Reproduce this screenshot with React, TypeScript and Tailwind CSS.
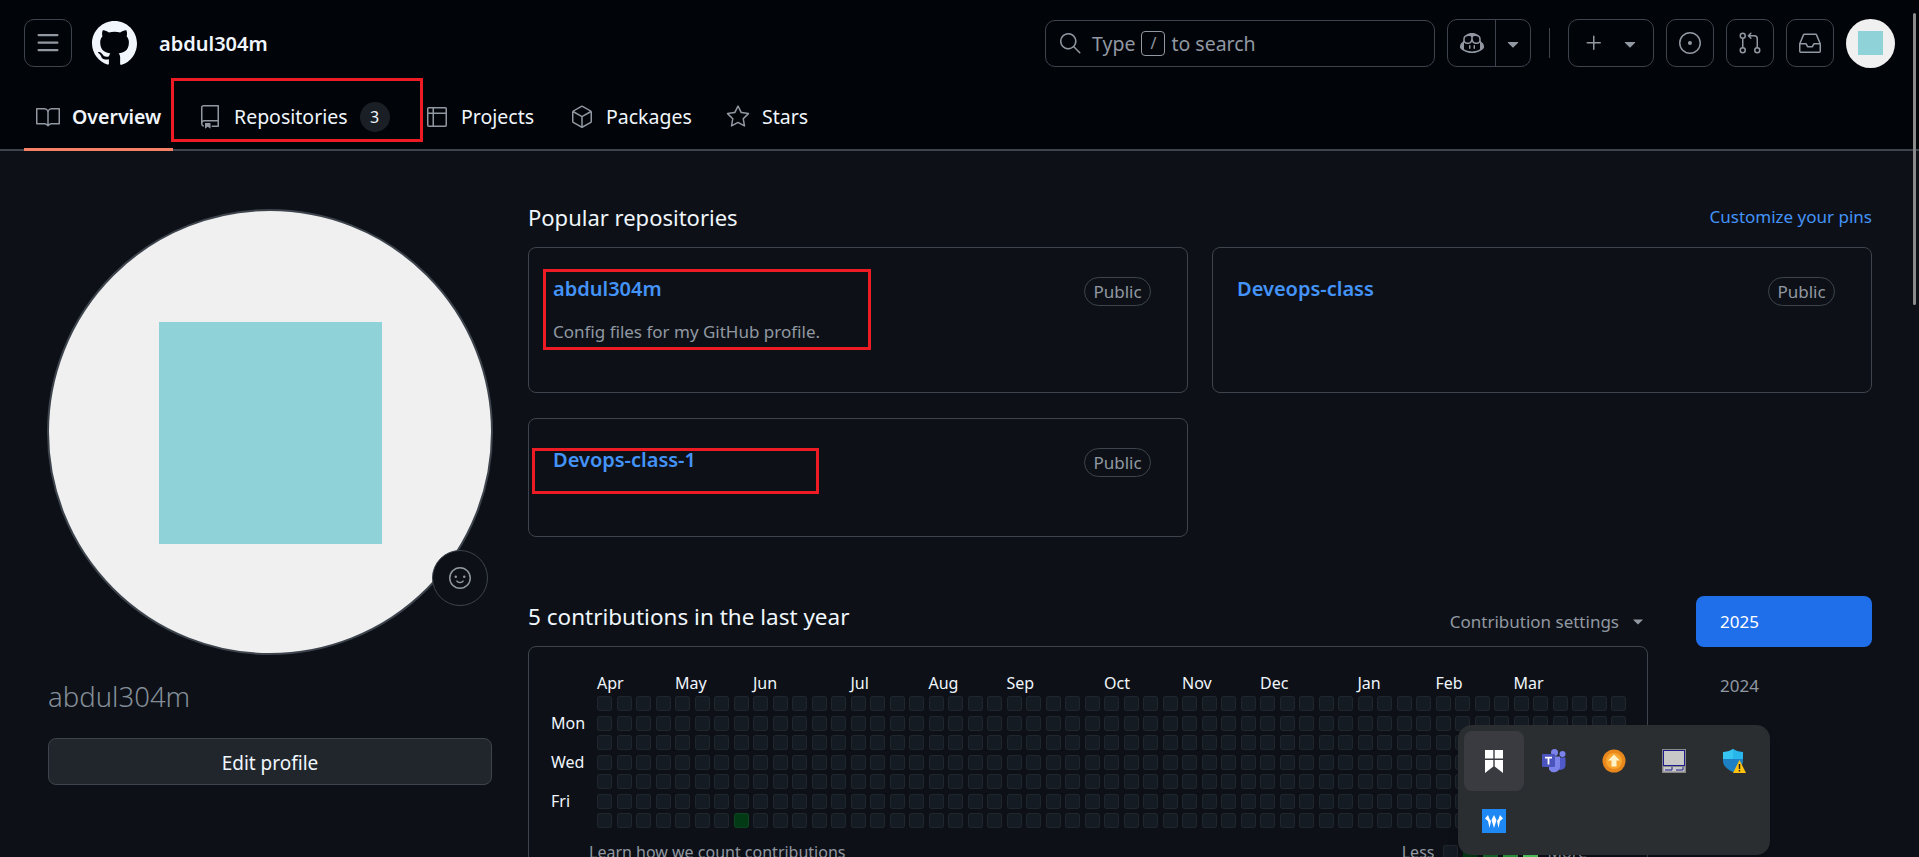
import React from 'react';
import {
  GoBook,
  GoRepo,
  GoTable,
  GoPackage,
  GoStar,
  GoSearch,
  GoPlus,
  GoIssueOpened,
  GoGitPullRequest,
  GoInbox,
  GoSmiley,
  GoCopilot,
  GoTriangleDown,
} from 'react-icons/go';

const font = { fontFamily: '"Noto Sans", "Open Sans", sans-serif' };

const tabs = [
  { label: 'Overview', icon: GoBook, active: true },
  { label: 'Repositories', icon: GoRepo, count: 3 },
  { label: 'Projects', icon: GoTable },
  { label: 'Packages', icon: GoPackage },
  { label: 'Stars', icon: GoStar },
];

const months = [
  { name: 'Apr', span: 4 },
  { name: 'May', span: 4 },
  { name: 'Jun', span: 5 },
  { name: 'Jul', span: 4 },
  { name: 'Aug', span: 4 },
  { name: 'Sep', span: 5 },
  { name: 'Oct', span: 4 },
  { name: 'Nov', span: 4 },
  { name: 'Dec', span: 5 },
  { name: 'Jan', span: 4 },
  { name: 'Feb', span: 4 },
  { name: 'Mar', span: 6 },
];

const days = ['', 'Mon', '', 'Wed', '', 'Fri', ''];

const GithubMark = () => (
  <svg width="45" height="45" viewBox="0 0 16 16" fill="currentColor" className="ml-[20px] text-[#f0f6fc] shrink-0">
    <path d="M8 0c4.42 0 8 3.58 8 8a8.013 8.013 0 0 1-5.45 7.59c-.4.08-.55-.17-.55-.38 0-.27.01-1.13.01-2.2 0-.75-.25-1.23-.54-1.48 1.78-.2 3.65-.88 3.65-3.95 0-.88-.31-1.59-.82-2.15.08-.2.36-1.02-.08-2.12 0 0-.67-.22-2.2.82-.64-.18-1.32-.27-2-.27-.68 0-1.36.09-2 .27-1.53-1.03-2.2-.82-2.2-.82-.44 1.1-.16 1.92-.08 2.12-.51.56-.82 1.28-.82 2.15 0 3.06 1.86 3.75 3.64 3.95-.23.2-.44.55-.51.98-.46.21-1.61.55-2.33-.66-.15-.24-.6-.83-1.23-.82-.67.01-.27.38.01.53.34.19.73.9.82 1.13.16.45.68 1.31 2.69.94 0 .67.01 1.3.01 1.49 0 .21-.15.45-.55.38A7.995 7.995 0 0 1 0 8c0-4.42 3.58-8 8-8Z" />
  </svg>
);

const ThreeBars = () => (
  <svg width="24" height="24" viewBox="0 0 16 16" fill="currentColor">
    <path d="M1 2.75A.75.75 0 0 1 1.75 2h12.5a.75.75 0 0 1 0 1.5H1.75A.75.75 0 0 1 1 2.75Zm0 5A.75.75 0 0 1 1.75 7h12.5a.75.75 0 0 1 0 1.5H1.75A.75.75 0 0 1 1 7.75ZM1.75 12h12.5a.75.75 0 0 1 0 1.5H1.75a.75.75 0 0 1 0-1.5Z" />
  </svg>
);

const IconButton = ({ children }: { children: React.ReactNode }) => (
  <button className="w-[48px] h-[48px] flex items-center justify-center rounded-[10px] border border-[#3d444d] text-[#9198a1]">
    {children}
  </button>
);

const PublicBadge = () => (
  <span className="h-[29px] w-[67px] mt-[1px] flex items-center justify-center rounded-full border border-[#3d444d] text-[#9198a1] text-[17px]">
    Public
  </span>
);

const RedBox = ({ className }: { className: string }) => (
  <div className={`absolute border-[3px] border-[#ed1c24] pointer-events-none ${className}`} />
);

const TrayIcons = () => (
  <div className="absolute left-[1458px] top-[725px] w-[312px] h-[130px] rounded-[14px] bg-[#2b2e31] p-[6px] shadow-lg grid grid-cols-[60px_60px_60px_60px_60px] auto-rows-[60px] gap-x-0">
    <div className="w-[60px] h-[60px] rounded-[8px] bg-[#393b40] flex items-center justify-center">
      <svg width="18" height="23" viewBox="0 0 18 23">
        <path d="M0 0h8.3v8.6H0zM9.7 0H18v8.6H9.7zM0 10h8.3v6.4L0 23zM9.7 10H18v13l-8.3-6.6z" fill="#fff" />
      </svg>
    </div>
    <div className="flex items-center justify-center">
      <svg width="24" height="24" viewBox="0 0 24 24">
        <circle cx="20.5" cy="5" r="3" fill="#7b83eb" />
        <path d="M15 8.5h8.5v7.5a5 5 0 0 1-8.5 3.5z" fill="#5059c9" />
        <circle cx="12.5" cy="3.5" r="3.5" fill="#7b83eb" />
        <path d="M7 7.5h11v10a6 6 0 0 1-11 3z" fill="#7b83eb" />
        <rect x="0" y="5" width="13" height="13" rx="1" fill="#4b53bc" />
        <path d="M3 7.8h7v1.6H7.4v6H5.6v-6H3z" fill="#fff" />
      </svg>
    </div>
    <div className="flex items-center justify-center">
      <svg width="24" height="24" viewBox="0 0 24 24">
        <circle cx="12" cy="12" r="11.5" fill="#e8871c" />
        <circle cx="12" cy="12" r="8" fill="#f8a630" />
        <path d="M12 5.5l6 6h-3.5v6h-5v-6H6z" fill="#fff2c8" />
      </svg>
    </div>
    <div className="flex items-center justify-center">
      <svg width="24" height="24" viewBox="0 0 24 24">
        <rect width="24" height="24" fill="#8a8a8a" />
        <rect x="1.5" y="1.5" width="21" height="15" fill="#c8c8c8" stroke="#1c1c8c" strokeWidth="1" />
        <rect x="1.5" y="18" width="21" height="4.5" fill="#c8c8c8" />
        <path d="M3 21h7v-3M14 21h7v-3" fill="none" stroke="#1c1c8c" strokeWidth="1" />
      </svg>
    </div>
    <div className="flex items-center justify-center">
      <svg width="24" height="24" viewBox="0 0 24 24">
        <path d="M11 0c3 2 6 3 10 3v9c0 5-4 8-10 11C5 20 1 17 1 12V3c4 0 7-1 10-3z" fill="#1d7fc4" />
        <path d="M11 0c3 2 6 3 10 3v7H11z" fill="#29b6ea" />
        <path d="M1 3c4 0 7-1 10-3v10H1z" fill="#35c5f0" />
        <path d="M17.5 11L24 24H11z" fill="#ffc20e" />
        <path d="M16.8 15h1.4v5h-1.4zM16.8 21h1.4v1.4h-1.4z" fill="#1c1c1c" />
      </svg>
    </div>
    <div className="flex items-center justify-center">
      <svg width="24" height="24" viewBox="0 0 24 24">
        <rect width="24" height="24" fill="#1e88f5" />
        <path d="M3 9.500L6 6l1.500 4L9 12l-1.500 7L6 12zM9.500 11L12 6l2.500 5L12 19zM15 12l1.500-2L18 6l3 3.500L18 12l-1.500 7z" fill="#fff" />
      </svg>
    </div>
  </div>
);

export default function App() {
  return (
    <div className="relative w-[1919px] h-[857px] overflow-hidden bg-[#0d1117] text-[#f0f6fc]" style={font}>
      <header className="h-[151px] bg-[#010409] border-b-2 border-[#3d444d] flex flex-col">
        <div className="flex items-center h-[86px] pl-[24px] pr-[24px]">
          <button className="w-[48px] h-[48px] flex items-center justify-center rounded-[10px] border border-[#3d444d] text-[#9198a1]">
            <ThreeBars />
          </button>
          <GithubMark />
          <span className="ml-[22px] mt-[2px] text-[20px] font-semibold">abdul304m</span>

          <div className="ml-auto w-[390px] h-[47px] flex items-center rounded-[10px] border border-[#3d444d] pl-[12px] text-[#9198a1] text-[19.5px]">
            <GoSearch size={24} />
            <span className="ml-[10px] mt-[1px]">Type</span>
            <span className="mx-[6px] w-[24px] h-[25px] flex items-center justify-center rounded-[4px] border border-[#9198a1] text-[16px]">/</span>
            <span className="mt-[1px]">to search</span>
          </div>

          <div className="ml-[12px] w-[84px] h-[48px] flex rounded-[10px] border border-[#3d444d] text-[#9198a1]">
            <div className="w-[48px] flex items-center justify-center border-r border-[#3d444d]">
              <GoCopilot size={24} />
            </div>
            <div className="flex-1 flex items-center justify-center">
              <GoTriangleDown size={20} className="mt-[3px]" />
            </div>
          </div>
          <div className="ml-[18px] w-px h-[30px] bg-[#3d444d]" />
          <div className="ml-[18px] w-[86px] h-[48px] flex items-center justify-center gap-[14px] rounded-[10px] border border-[#3d444d] text-[#9198a1]">
            <GoPlus size={24} />
            <GoTriangleDown size={20} className="mt-[3px]" />
          </div>
          <div className="ml-[12px] flex gap-[12px]">
            <IconButton><GoIssueOpened size={24} /></IconButton>
            <IconButton><GoGitPullRequest size={24} /></IconButton>
            <IconButton><GoInbox size={24} /></IconButton>
          </div>
          <div className="ml-[12px] w-[49px] h-[49px] rounded-full bg-[#f0f0f0] flex items-center justify-center">
            <div className="w-[25px] h-[24px] bg-[#8fd3d8]" />
          </div>
        </div>

        <nav className="relative flex-1 flex items-stretch pl-[24px] text-[19.5px]">
          {tabs.map((tab, i) => (
            <a
              key={tab.label}
              className={`relative flex items-center pb-[2px] ${i === 0 ? 'w-[149px] pl-[12px] font-semibold' : ''} ${i === 1 ? 'w-[252px] pl-[25px]' : ''} ${i === 2 ? 'w-[145px]' : ''} ${i === 3 ? 'w-[156px]' : ''}`}
            >
              <tab.icon size={24} className="text-[#9198a1] shrink-0" />
              <span className="ml-[12px]">{tab.label}</span>
              {tab.count !== undefined && (
                <span className="ml-[12px] w-[30px] h-[30px] rounded-full bg-[#1a1f26] flex items-center justify-center text-[16px]">
                  {tab.count}
                </span>
              )}
              {tab.active && <div className="absolute left-0 right-0 -bottom-[2px] h-[3px] bg-[#f78166]" />}
            </a>
          ))}
          <RedBox className="left-[171px] top-[-8px] w-[252px] h-[64px]" />
        </nav>
      </header>

      <main className="flex items-start pl-[48px] pt-[59px] gap-[36px]">
        <aside className="w-[444px] shrink-0">
          <div className="relative w-[446px] h-[446px] -ml-[1px] -mt-[1px] rounded-full bg-[#f0f0f0] border-2 border-[#3d444d] flex items-center justify-center">
            <div className="w-[223px] h-[222px] mt-[2px] bg-[#8fd3d8]" />
            <button className="absolute left-[383px] top-[339px] w-[56px] h-[56px] rounded-full bg-[#0d1117] border border-[#3d444d] text-[#9198a1] flex items-center justify-center">
              <GoSmiley size={24} />
            </button>
          </div>
          <h1 className="mt-[22px] text-[27.5px] leading-[40px] font-light text-[#848d97]">abdul304m</h1>
          <button className="mt-[21px] w-full h-[47px] pt-[3px] rounded-[8px] bg-[#21262d] border border-[#3d444d] text-[19px]">
            Edit profile
          </button>
        </aside>

        <section className="w-[1344px]">
          <div className="flex items-center justify-between h-[28px] -mt-[7px]">
            <h2 className="text-[22px]">Popular repositories</h2>
            <a className="text-[17px] text-[#4493f8]">Customize your pins</a>
          </div>
          <div className="mt-[16px] grid grid-cols-[660px_660px] gap-x-[24px] gap-y-[25px]">
            <div className="relative h-[146px] rounded-[8px] border border-[#3d444d] pl-[24px] pr-[36px] pt-[28px]">
              <div className="flex items-start justify-between">
                <a className="text-[20px] leading-[26px] font-semibold text-[#4493f8]">abdul304m</a>
                <PublicBadge />
              </div>
              <p className="text-[17px] leading-[26px] text-[#9198a1] mt-[13px]">Config files for my GitHub profile.</p>
              <RedBox className="left-[14px] top-[21px] w-[328px] h-[81px]" />
            </div>
            <div className="h-[146px] rounded-[8px] border border-[#3d444d] pl-[24px] pr-[36px] pt-[28px]">
              <div className="flex items-start justify-between">
                <a className="text-[20px] leading-[26px] font-semibold text-[#4493f8]">Deveops-class</a>
                <PublicBadge />
              </div>
            </div>
            <div className="relative h-[119px] rounded-[8px] border border-[#3d444d] pl-[24px] pr-[36px] pt-[28px]">
              <div className="flex items-start justify-between">
                <a className="text-[20px] leading-[26px] font-semibold text-[#4493f8]">Devops-class-1</a>
                <PublicBadge />
              </div>
              <RedBox className="left-[3px] top-[29px] w-[287px] h-[46px]" />
            </div>
          </div>

          <div className="mt-[65px] flex items-start gap-[48px]">
            <div className="w-[1120px] shrink-0">
              <div className="flex items-center justify-between h-[30px] pr-[1px]">
                <h2 className="text-[22.5px]">5 contributions in the last year</h2>
                <div className="flex items-center gap-[10px] text-[17px] text-[#9198a1] pt-[10px]">
                  Contribution settings
                  <GoTriangleDown size={18} />
                </div>
              </div>
              <div className="mt-[14px] h-[260px] rounded-t-[8px] border border-[#3d444d] pl-[22px] pt-[26px]">
                <div className="flex">
                  <div className="w-[46px] pt-[23px] grid grid-rows-[repeat(7,15px)] gap-y-[4.5px] text-[16px] text-[#f0f6fc]">
                    {days.map((d, i) => (
                      <span key={i} className="leading-[15px]">{d}</span>
                    ))}
                  </div>
                  <div>
                    <div className="grid grid-cols-[repeat(53,15px)] gap-x-[4.5px] h-[23px] text-[16px] leading-[20px]">
                      {months.map((m) => (
                        <span key={m.name} style={{ gridColumn: `span ${m.span}` }}>{m.name}</span>
                      ))}
                    </div>
                    <div className="grid grid-cols-[repeat(53,15px)] grid-rows-[repeat(7,15px)] grid-flow-col gap-[4.5px]">
                      {Array.from({ length: 371 }).map((_, i) => (
                        <div
                          key={i}
                          className={`rounded-[3px] border border-[#ffffff0d] ${i === 55 ? 'bg-[#033a16]' : 'bg-[#151b23]'}`}
                        />
                      ))}
                    </div>
                  </div>
                </div>
                <div className="mt-[14px] flex items-center text-[16px] text-[#9198a1] pl-[38px] pr-[60px] leading-[20px]">
                  <span>Learn how we count contributions</span>
                  <div className="ml-auto flex items-center gap-[5px]">
                    <span className="mr-[4px]">Less</span>
                    <div className="w-[15px] h-[15px] rounded-[3px] bg-[#151b23] border border-[#ffffff0d]" />
                    <div className="w-[15px] h-[15px] rounded-[3px] bg-[#033a16]" />
                    <div className="w-[15px] h-[15px] rounded-[3px] bg-[#196c2e]" />
                    <div className="w-[15px] h-[15px] rounded-[3px] bg-[#2ea043]" />
                    <div className="w-[15px] h-[15px] rounded-[3px] bg-[#56d364]" />
                    <span className="ml-[4px]">More</span>
                  </div>
                </div>
              </div>
            </div>

            <div className="w-[176px] shrink-0 -mt-[6px] text-[17px]">
              <div className="h-[51px] rounded-[8px] bg-[#1f6feb] pl-[24px] flex items-center text-white">2025</div>
              <div className="h-[51px] mt-[13px] pl-[24px] flex items-center text-[#9198a1]">2024</div>
            </div>
          </div>
        </section>
      </main>

      <TrayIcons />
      <div className="absolute left-[1913px] top-[13px] w-[3px] h-[292px] rounded-full bg-[#8b8b8b]" />
    </div>
  );
}
